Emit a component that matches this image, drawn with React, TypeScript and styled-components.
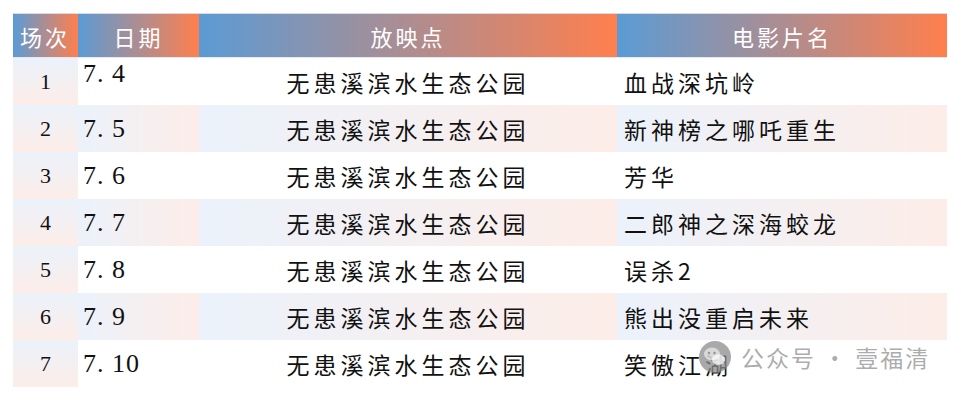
import React from 'react';
import styled, { createGlobalStyle, css } from 'styled-components';

type Show = { id: number; date: string; place: string; film: string };

const shows: Show[] = [
  { id: 1, date: '7.4', place: '无患溪滨水生态公园', film: '血战深坑岭' },
  { id: 2, date: '7.5', place: '无患溪滨水生态公园', film: '新神榜之哪吒重生' },
  { id: 3, date: '7.6', place: '无患溪滨水生态公园', film: '芳华' },
  { id: 4, date: '7.7', place: '无患溪滨水生态公园', film: '二郎神之深海蛟龙' },
  { id: 5, date: '7.8', place: '无患溪滨水生态公园', film: '误杀2' },
  { id: 6, date: '7.9', place: '无患溪滨水生态公园', film: '熊出没重启未来' },
  { id: 7, date: '7.10', place: '无患溪滨水生态公园', film: '笑傲江湖' },
];

const BLUE = '#5b9bd5';
const ORANGE = '#ff7f4d';
const TINT_BLUE = '#ebf2fb';
const TINT_PINK = '#fdede8';

const GlobalStyle = createGlobalStyle`
  html, body {
    margin: 0;
    padding: 0;
    background: #fff;
  }
  body {
    font-family: "Noto Sans CJK SC", "Noto Sans", sans-serif;
  }
`;

const Page = styled.div`
  position: relative;
  width: 960px;
  height: 401px;
  padding: 13px 0 0 13px;
  box-sizing: border-box;
`;

const Table = styled.div`
  display: grid;
  grid-template-columns: 65px 121px 418px 330px;
  grid-template-rows: 45px repeat(7, 47px);
`;

const HeaderCell = styled.div<{ $align?: 'left' | 'center' }>`
  display: flex;
  align-items: center;
  justify-content: ${({ $align }) => ($align === 'left' ? 'flex-start' : 'center')};
  padding-left: ${({ $align }) => ($align === 'left' ? '7px' : '0')};
  background: linear-gradient(to right, ${BLUE}, ${ORANGE});
  border-top: 1px solid #d8dbe6;
  border-bottom: 1px solid #e6e9f0;
  color: #fff;
  font-family: "Noto Sans CJK SC", sans-serif;
  font-size: 22px;
  letter-spacing: 3px;
  box-sizing: border-box;
`;

const IdCell = styled.div`
  display: flex;
  align-items: center;
  justify-content: center;
  background: linear-gradient(to bottom, ${TINT_BLUE}, ${TINT_PINK});
  font-family: "Liberation Serif", serif;
  font-size: 22px;
  color: #111;
`;

const tinted = css`
  background: linear-gradient(to right, ${TINT_BLUE}, ${TINT_PINK});
`;

const BodyCell = styled.div<{ $tinted: boolean }>`
  display: flex;
  align-items: center;
  color: #111;
  ${({ $tinted }) => ($tinted ? tinted : 'background: #fff;')}
`;

const DateCell = styled(BodyCell)<{ $top?: boolean }>`
  align-items: ${({ $top }) => ($top ? 'flex-start' : 'center')};
  padding: ${({ $top }) => ($top ? '1px 0 0 5px' : '0 0 0 5px')};
  font-family: "Liberation Serif", serif;
  font-size: 26px;
  letter-spacing: 1px;
  white-space: pre;
`;

const PlaceCell = styled(BodyCell)`
  justify-content: center;
  font-size: 23px;
  letter-spacing: 4px;
`;

const FilmCell = styled(BodyCell)`
  padding-left: 7px;
  font-size: 23px;
  letter-spacing: 4px;
`;

const Watermark = styled.div`
  position: absolute;
  left: 698px;
  top: 340px;
  display: flex;
  align-items: center;
  gap: 9px;
  color: rgba(150, 150, 150, 0.8);
  font-family: "Noto Sans CJK SC", sans-serif;
  font-size: 23px;
  letter-spacing: 2px;
  white-space: pre;
`;

const WechatMark = () => (
  <svg width="34" height="34" viewBox="0 0 34 34">
    <circle cx="17" cy="17" r="16" fill="rgba(140,140,140,0.75)" />
    <ellipse cx="14" cy="14" rx="8" ry="6.5" fill="rgba(255,255,255,0.55)" />
    <ellipse cx="20.5" cy="19.5" rx="6.5" ry="5.2" fill="rgba(255,255,255,0.75)" />
    <circle cx="11" cy="13" r="1.2" fill="rgba(140,140,140,0.9)" />
    <circle cx="16.5" cy="13" r="1.2" fill="rgba(140,140,140,0.9)" />
  </svg>
);

const formatDate = (d: string) => d.replace('.', '. ');

const App: React.FC = () => {
  return (
    <>
      <GlobalStyle />
      <Page>
        <Table>
          <HeaderCell $align="left">场次</HeaderCell>
          <HeaderCell>日期</HeaderCell>
          <HeaderCell>放映点</HeaderCell>
          <HeaderCell>电影片名</HeaderCell>
          {shows.map((s) => {
            const even = s.id % 2 === 0;
            return (
              <React.Fragment key={s.id}>
                <IdCell>{s.id}</IdCell>
                <DateCell $tinted={even} $top={s.id === 1}>
                  {formatDate(s.date)}
                </DateCell>
                <PlaceCell $tinted={even}>{s.place}</PlaceCell>
                <FilmCell $tinted={even}>{s.film}</FilmCell>
              </React.Fragment>
            );
          })}
        </Table>
        <Watermark>
          <WechatMark />
          <span>{'公众号 · 壹福清'}</span>
        </Watermark>
      </Page>
    </>
  );
};

export default App;
